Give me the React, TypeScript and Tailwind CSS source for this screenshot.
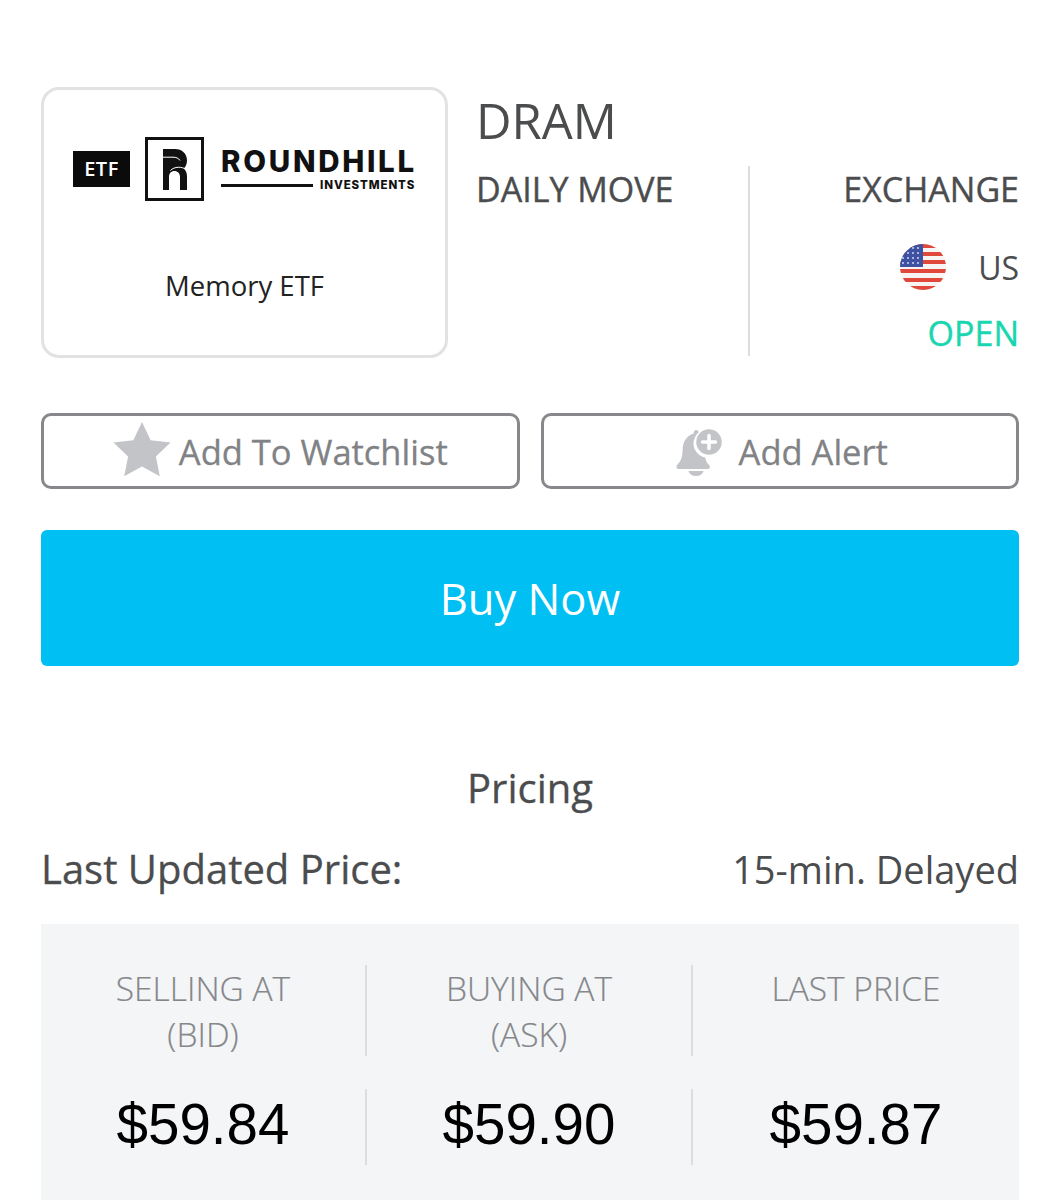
const sans = "font-['Open_Sans',sans-serif]";

function RLogo() {
  return (
    <div className="w-[59px] h-[64px] border-[3px] border-[#111] flex items-center justify-center shrink-0">
      <svg width="24" height="41" viewBox="0 0 24 41">
        <path d="M0 0h12c7 0 12 4.500 12 11.500 0 3.300-1.100 6-3.100 8 2 2 3.100 4.700 3.100 8V41h-7V28c0-3.800-2.400-6-5.600-6-3.300 0-5.400 2.200-5.400 6v13H0z" fill="#111" />
        <path d="M0 8.200h10c3 0 5.500.8 7 3.300" fill="none" stroke="#fff" strokeWidth="1" />
        <path d="M7.400 21.500c3.800-4 11.500-4.500 16.600-.5" fill="none" stroke="#fff" strokeWidth="1" />
      </svg>
    </div>
  );
}

function Flag() {
  return (
    <svg width="46" height="46" viewBox="0 0 46 46" className="shrink-0">
      <defs>
        <clipPath id="flagclip"><circle cx="23" cy="23" r="23" /></clipPath>
      </defs>
      <g clipPath="url(#flagclip)">
        <rect width="46" height="46" fill="#f7f5f4" />
        <rect y="0" width="46" height="4" fill="#e0483c" />
        <rect y="8" width="46" height="4" fill="#e0483c" />
        <rect y="16" width="46" height="4" fill="#e0483c" />
        <rect y="25" width="46" height="4" fill="#e0483c" />
        <rect y="34" width="46" height="4" fill="#e0483c" />
        <rect y="42" width="46" height="4" fill="#e0483c" />
        <rect width="23" height="23" fill="#3f51a3" />
        {[4, 9, 14, 19].map((y) =>
          [3, 8, 13, 18].map((x) => <circle key={`${x}-${y}`} cx={x} cy={y} r="1.100" fill="#c4cbe8" />)
        )}
      </g>
    </svg>
  );
}

function Star() {
  return (
    <svg width="58" height="56" viewBox="0 0 58 56" className="shrink-0 mb-[4px]">
      <path d="M29 1l8.600 18.300 20 2.300-14.700 13.900 3.900 19.800L29 45.400 11.200 55.300l3.900-19.800L.4 21.600l20-2.300z" fill="#c2c4c7" />
    </svg>
  );
}

function BellPlus() {
  return (
    <svg width="48" height="50" viewBox="0 0 48 50" className="shrink-0 mt-[2px]">
      <path d="M20 3c1.500 0 2.600 1 2.800 2.400-3.300 2.700-5.300 6.700-5.300 11.100 0 6.900 5 12.700 11.600 13.900.6 3 1.700 5.300 3.500 7.100 1.200 1.200 1.400 2.100 1.200 3-.3 1-1.100 1.500-2.500 1.500H3.300c-1.500 0-2.400-.6-2.700-1.600-.3-1 .1-2 1.200-3.100 3.600-3.800 4.700-8.300 4.800-14.300.1-8.300 4.100-14.600 11-16.600C17.800 4.700 18.700 3 20 3z" fill="#c2c4c7" />
      <path d="M12.500 44h15c-.8 3-3.800 5-7.500 5s-6.700-2-7.500-5z" fill="#c2c4c7" />
      <circle cx="33" cy="15" r="13.500" fill="#c2c4c7" stroke="#fff" strokeWidth="1.500" />
      <path d="M33 8.500v13M26.500 15h13" stroke="#fff" strokeWidth="3.500" strokeLinecap="round" />
    </svg>
  );
}

function PriceColumn({ label, sub, last }: { label: string; sub?: string; last?: boolean }) {
  return (
    <div className={`h-[91px] text-center text-[33.500px] leading-[46px] font-light [-webkit-text-stroke:0.2px] text-[#85878b] ${last ? "" : "border-r-2 border-[#dcdde0]"}`}>
      <div>{label}</div>
      {sub && <div>{sub}</div>}
    </div>
  );
}

function PriceValue({ value, last }: { value: string; last?: boolean }) {
  return (
    <div className={`h-[76px] pb-[3px] flex items-center justify-center font-['Liberation_Sans',sans-serif] text-[56.500px] text-black ${last ? "" : "border-r-2 border-[#dcdde0]"}`}>
      {value}
    </div>
  );
}

export default function App() {
  return (
    <div className={`${sans} w-[1060px] h-[1200px] overflow-hidden bg-white px-[41px] pt-[87px]`}>
      <div className="flex h-[271px]">
        <div className="w-[407px] h-full shrink-0 rounded-[18px] border-[3px] border-[#e1e2e3] flex flex-col items-center pt-[47px]">
          <div className="flex items-center">
            <div className="w-[57px] h-[36px] bg-[#0b0b0b] flex items-center justify-center text-white text-[20px] font-semibold tracking-[0.5px]">ETF</div>
            <div className="ml-[15px]"><RLogo /></div>
            <div className="ml-[17px] w-[195px] flex flex-col font-['Inter',sans-serif] text-[#111]">
              <div className="text-[29.500px] leading-[30px] font-extrabold tracking-[2.700px] whitespace-nowrap">ROUNDHILL</div>
              <div className="flex items-center mt-[2px]">
                <div className="w-[92px] h-[3px] bg-[#111] shrink-0" />
                <div className="ml-[7px] text-[11.500px] leading-[14px] font-extrabold tracking-[0.900px] whitespace-nowrap">INVESTMENTS</div>
              </div>
            </div>
          </div>
          <div className="mt-[66px] text-[27.500px] leading-[38px] text-[#222]">Memory ETF</div>
        </div>
        <div className="flex-1 pl-[28px] flex flex-col">
          <div className="text-[49px] leading-[64px] text-[#4b4c4e] mt-[1px]">DRAM</div>
          <div className="flex mt-[14px] h-[190px]">
            <div className="w-[274px] shrink-0 border-r-2 border-[#dcdde0] text-[34px] leading-[48px] [-webkit-text-stroke:0.4px] text-[#4b4c4e]">
              <div className="-mt-[1px]">DAILY MOVE</div>
            </div>
            <div className="flex-1 flex flex-col items-end">
              <div className="text-[34px] leading-[48px] [-webkit-text-stroke:0.4px] text-[#4b4c4e] -mt-[1px]">EXCHANGE</div>
              <div className="flex items-center mt-[30px]">
                <Flag />
                <div className="ml-[32px] text-[32px] leading-[46px] text-[#4b4c4e] mt-[2px]">US</div>
              </div>
              <div className="mt-[19px] text-[34px] leading-[46px] [-webkit-text-stroke:0.4px] text-[#19d6b0]">OPEN</div>
            </div>
          </div>
        </div>
      </div>

      <div className="mt-[55px] grid grid-cols-2 gap-[21px] h-[76px]">
        <div className="rounded-[10px] border-[3px] border-[#87888b] flex items-center justify-center text-[34.500px] [-webkit-text-stroke:0.3px] text-[#808285]">
          <Star />
          <span className="ml-[8px] mt-[1px]">Add To Watchlist</span>
        </div>
        <div className="pl-[4px] rounded-[10px] border-[3px] border-[#87888b] flex items-center justify-center text-[34.500px] [-webkit-text-stroke:0.3px] text-[#808285]">
          <BellPlus />
          <span className="ml-[15px] mt-[1px]">Add Alert</span>
        </div>
      </div>

      <div className="mt-[41px] h-[136px] pt-[1px] rounded-[6px] bg-[#00c0f3] flex items-center justify-center text-[43.500px] text-white">Buy Now</div>

      <div className="mt-[97px] text-center text-[40px] leading-[50px] [-webkit-text-stroke:0.3px] text-[#4b4c4e]">Pricing</div>
      <div className="mt-[31px] flex justify-between items-center h-[50px] text-[#4b4c4e]">
        <span className="text-[40px] [-webkit-text-stroke:0.3px]">Last Updated Price:</span>
        <span className="text-[38px]">15-min. Delayed</span>
      </div>

      <div className="mt-[30px] bg-[#f4f5f7] pt-[41px] h-[300px]">
        <div className="grid grid-cols-3">
          <PriceColumn label="SELLING AT" sub="(BID)" />
          <PriceColumn label="BUYING AT" sub="(ASK)" />
          <PriceColumn label="LAST PRICE" last />
        </div>
        <div className="grid grid-cols-3 mt-[33px]">
          <PriceValue value="$59.84" />
          <PriceValue value="$59.90" />
          <PriceValue value="$59.87" last />
        </div>
      </div>
    </div>
  );
}
